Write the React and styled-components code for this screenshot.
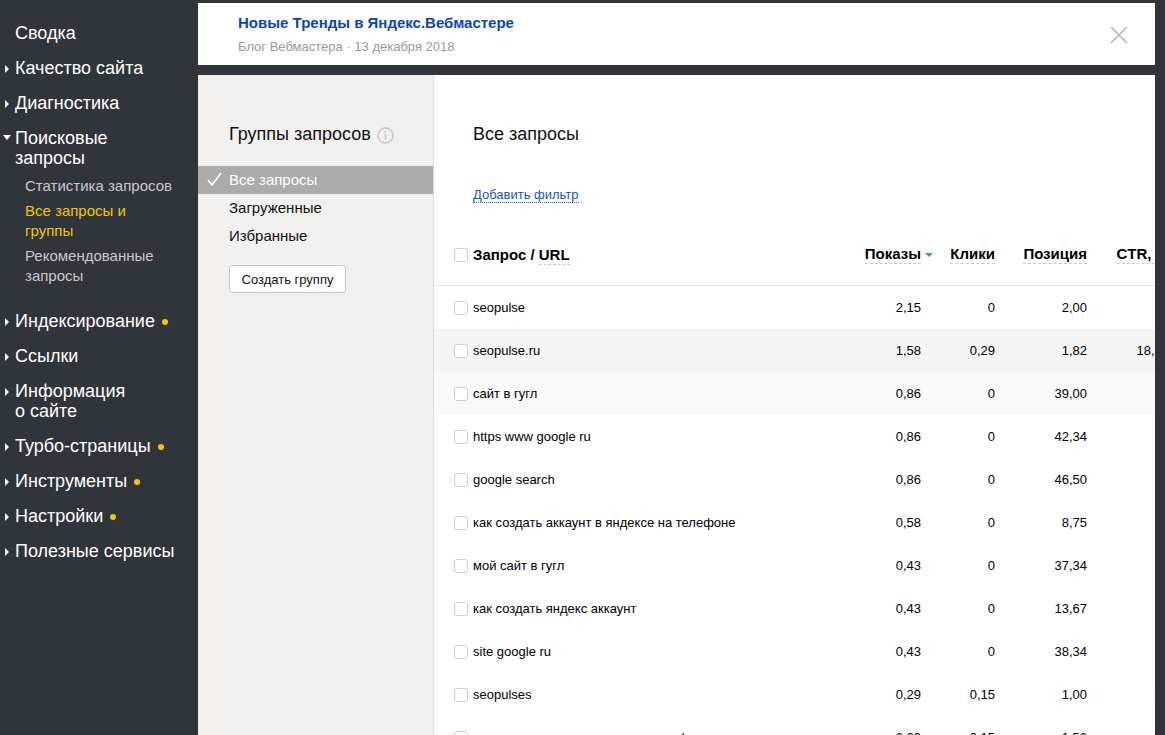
import React from 'react';
import styled, { createGlobalStyle } from 'styled-components';

const GlobalStyle = createGlobalStyle`
  html, body {
    margin: 0;
    height: 100%;
    overflow: hidden;
    background: #30343b;
    font-family: "Liberation Sans", Arial, sans-serif;
  }
  * { box-sizing: border-box; }
`;

const nav = [
  { label: 'Сводка', noArrow: true },
  { label: 'Качество сайта' },
  { label: 'Диагностика' },
  {
    label: ['Поисковые', 'запросы'],
    open: true,
    sub: [
      { label: ['Статистика запросов'] },
      { label: ['Все запросы и', 'группы'], active: true },
      { label: ['Рекомендованные', 'запросы'] },
    ],
  },
  { label: 'Индексирование', dot: true },
  { label: 'Ссылки' },
  { label: ['Информация', 'о сайте'] },
  { label: 'Турбо-страницы', dot: true },
  { label: 'Инструменты', dot: true },
  { label: 'Настройки', dot: true },
  { label: 'Полезные сервисы' },
];

const rows = [
  ['seopulse', '2,15', '0', '2,00', '0'],
  ['seopulse.ru', '1,58', '0,29', '1,82', '18,35'],
  ['сайт в гугл', '0,86', '0', '39,00', '0'],
  ['https www google ru', '0,86', '0', '42,34', '0'],
  ['google search', '0,86', '0', '46,50', '0'],
  ['как создать аккаунт в яндексе на телефоне', '0,58', '0', '8,75', '0'],
  ['мой сайт в гугл', '0,43', '0', '37,34', '0'],
  ['как создать яндекс аккаунт', '0,43', '0', '13,67', '0'],
  ['site google ru', '0,43', '0', '38,34', '0'],
  ['seopulses', '0,29', '0,15', '1,00', '52'],
  ['как создать аккаунт в гугл на телефоне', '0,29', '0,15', '1,50', '52'],
];

const lines = (label) =>
  (Array.isArray(label) ? label : [label]).map((l, i, arr) => (
    <React.Fragment key={i}>
      {l}
      {i < arr.length - 1 && <br />}
    </React.Fragment>
  ));

const App = () => {
  return (
    <Page>
      <GlobalStyle />
      <Sidebar>
        <NavList>
          {nav.map((item, i) => (
            <NavItem key={i}>
              <NavHead>
                <Arrow>
                  {!item.noArrow &&
                    (item.open ? (
                      <svg width="8" height="5" viewBox="0 0 8 5">
                        <path d="M0 0h8L4 5z" fill="#fff" />
                      </svg>
                    ) : (
                      <svg width="4" height="8" viewBox="0 0 4 8">
                        <path d="M0 0l4 4-4 4z" fill="#fff" />
                      </svg>
                    ))}
                </Arrow>
                <span>
                  {lines(item.label)}
                  {item.dot && <Dot />}
                </span>
              </NavHead>
              {item.sub && (
                <SubList>
                  {item.sub.map((s, j) => (
                    <SubItem key={j} $active={s.active}>
                      {lines(s.label)}
                    </SubItem>
                  ))}
                </SubList>
              )}
            </NavItem>
          ))}
        </NavList>
      </Sidebar>

      <MainColumn>
        <Banner>
          <BannerText>
            <BannerTitle>Новые Тренды в Яндекс.Вебмастере</BannerTitle>
            <BannerMeta>Блог Вебмастера · 13 декабря 2018</BannerMeta>
          </BannerText>
          <CloseButton>
            <svg width="18" height="18" viewBox="0 0 18 18">
              <path d="M1 1l16 16M17 1L1 17" stroke="#b5b5b5" strokeWidth="1.6" />
            </svg>
          </CloseButton>
        </Banner>

        <Content>
          <GroupsPanel>
            <GroupsTitle>
              Группы запросов
              <InfoIcon>
                <svg width="17" height="17" viewBox="0 0 17 17">
                  <circle cx="8.5" cy="8.5" r="7.5" fill="none" stroke="#c4c4c4" strokeWidth="1.3" />
                  <circle cx="8.5" cy="5" r="1" fill="#c4c4c4" />
                  <path d="M8.5 7.3v5.2" stroke="#c4c4c4" strokeWidth="1.5" />
                </svg>
              </InfoIcon>
            </GroupsTitle>
            <GroupList>
              <GroupRow $selected>
                <Check>
                  <svg width="15" height="14" viewBox="0 0 15 14">
                    <path d="M1 8l4 5L14 1" fill="none" stroke="#fff" strokeWidth="1.6" />
                  </svg>
                </Check>
                Все запросы
              </GroupRow>
              <GroupRow>
                <Check />
                Загруженные
              </GroupRow>
              <GroupRow>
                <Check />
                Избранные
              </GroupRow>
            </GroupList>
            <CreateButton>Создать группу</CreateButton>
          </GroupsPanel>

          <MainPanel>
            <MainTitle>Все запросы</MainTitle>
            <FilterWrap>
              <FilterLink>Добавить фильтр</FilterLink>
            </FilterWrap>
            <Table>
              <HeadRow>
                <Checkbox />
                <QueryCell>
                  <b>
                    Запрос / <Dashed>URL</Dashed>
                  </b>
                </QueryCell>
                <HeadCell $w={90}>
                  <Dashed>Показы</Dashed>
                  <SortArrow>
                    <svg width="8" height="4" viewBox="0 0 8 4">
                      <path d="M0 0h8L4 4z" fill="#3d8fe6" />
                    </svg>
                  </SortArrow>
                </HeadCell>
                <HeadCell $w={62}>
                  <Dashed>Клики</Dashed>
                </HeadCell>
                <HeadCell $w={92}>
                  <Dashed>Позиция</Dashed>
                </HeadCell>
                <HeadCell $w={82}>
                  <Dashed>CTR, %</Dashed>
                </HeadCell>
              </HeadRow>
              {rows.map((r, i) => (
                <Row key={i} $bg={i === 1 ? '#f4f4f4' : i === 2 ? '#f9f9f9' : '#fff'}>
                  <Checkbox />
                  <QueryCell>{r[0]}</QueryCell>
                  <Cell $w={90} $pr={12}>{r[1]}</Cell>
                  <Cell $w={62}>{r[2]}</Cell>
                  <Cell $w={92}>{r[3]}</Cell>
                  <Cell $w={82}>{r[4]}</Cell>
                </Row>
              ))}
            </Table>
          </MainPanel>
        </Content>
      </MainColumn>
    </Page>
  );
};

export default App;

const Page = styled.div`
  display: flex;
  height: 735px;
  overflow: hidden;
  background: #30343b;
`;

const Sidebar = styled.aside`
  width: 198px;
  flex-shrink: 0;
  padding-top: 23px;
  color: #fff;
`;

const NavList = styled.ul`
  list-style: none;
  margin: 0;
  padding: 0;
  display: flex;
  flex-direction: column;
  gap: 15px;
`;

const NavItem = styled.li`
  font-size: 18px;
  line-height: 20px;
`;

const NavHead = styled.div`
  display: flex;
`;

const Arrow = styled.span`
  width: 15px;
  flex-shrink: 0;
  display: flex;
  justify-content: center;
  align-items: flex-start;
  padding-top: 7px;
  padding-right: 2px;
`;

const Dot = styled.span`
  display: inline-block;
  width: 6px;
  height: 6px;
  border-radius: 50%;
  background: #f6c700;
  margin-left: 7px;
  vertical-align: 2px;
`;

const SubList = styled.ul`
  list-style: none;
  margin: 8px 0 0 25px;
  padding: 0 0 10px;
  display: flex;
  flex-direction: column;
  gap: 5px;
`;

const SubItem = styled.li`
  font-size: 15px;
  line-height: 20px;
  color: ${(p) => (p.$active ? '#f6c700' : '#c9c9c9')};
`;

const MainColumn = styled.div`
  flex: 1;
  min-width: 0;
  display: flex;
  flex-direction: column;
  padding: 3px 10px 0 0;
`;

const Banner = styled.div`
  height: 62px;
  flex-shrink: 0;
  background: #fff;
  display: flex;
  align-items: center;
  padding: 0 27px 0 40px;
  margin-bottom: 10px;
`;

const BannerText = styled.div`
  align-self: flex-start;
  padding-top: 11px;
  display: flex;
  flex-direction: column;
  gap: 7px;
`;

const BannerTitle = styled.div`
  font-size: 15px;
  line-height: 18px;
  font-weight: bold;
  color: #0b45b5;
`;

const BannerMeta = styled.div`
  font-size: 13px;
  line-height: 16px;
  color: #999;
`;

const CloseButton = styled.div`
  margin-left: auto;
  display: flex;
  margin-top: 1px;
`;

const Content = styled.div`
  flex: 1;
  display: flex;
  background: #fff;
  overflow: hidden;
`;

const GroupsPanel = styled.div`
  width: 236px;
  flex-shrink: 0;
  background: #f1f0ed;
  border-right: 1px solid #dedede;
`;

const GroupsTitle = styled.div`
  display: flex;
  align-items: center;
  padding: 49px 0 0 31px;
  font-size: 18px;
  line-height: 20px;
  color: #111;
`;

const InfoIcon = styled.span`
  display: flex;
  margin-left: 6px;
  margin-top: 2px;
`;

const GroupList = styled.div`
  margin-top: 22px;
`;

const GroupRow = styled.div`
  height: 28px;
  display: flex;
  align-items: center;
  padding: 0 0 2px 9px;
  font-size: 15px;
  color: ${(p) => (p.$selected ? '#fff' : '#111')};
  background: ${(p) => (p.$selected ? '#ababab' : 'transparent')};
`;

const Check = styled.span`
  width: 22px;
  display: flex;
  align-items: center;
`;

const CreateButton = styled.button`
  margin: 15px 0 0 31px;
  width: 117px;
  height: 28px;
  padding: 0;
  background: #fff;
  border: 1px solid #c6c6c6;
  border-radius: 3px;
  font-family: inherit;
  font-size: 13px;
  color: #111;
`;

const MainPanel = styled.div`
  flex: 1;
  min-width: 0;
  overflow: hidden;
`;

const MainTitle = styled.div`
  padding: 49px 0 0 39px;
  font-size: 18px;
  line-height: 20px;
  color: #111;
`;

const FilterWrap = styled.div`
  margin: 42px 0 0 39px;
  line-height: 16px;
`;

const FilterLink = styled.span`
  font-size: 13px;
  color: #1a55c0;
  border-bottom: 1px dotted #1a55c0;
`;

const Table = styled.div`
  width: 760px;
  margin-top: 22px;
`;

const HeadRow = styled.div`
  height: 61px;
  display: flex;
  align-items: center;
  padding: 0 25px 1px 20px;
  border-bottom: 1px solid #e6e6e6;
  font-size: 15px;
  color: #000;
`;

const Row = styled.div`
  height: 43px;
  display: flex;
  align-items: center;
  padding: 0 25px 0 20px;
  font-size: 13px;
  color: #000;
  background: ${(p) => p.$bg};
`;

const Checkbox = styled.span`
  width: 14px;
  height: 14px;
  flex-shrink: 0;
  border: 1px solid #cfcfcf;
  border-radius: 3px;
  background: #fff;
  margin-right: 5px;
`;

const QueryCell = styled.div`
  flex: 1;
  white-space: nowrap;
`;

const HeadCell = styled.div`
  width: ${(p) => p.$w}px;
  flex-shrink: 0;
  display: flex;
  justify-content: flex-end;
  align-items: center;
  font-weight: bold;
  white-space: nowrap;
`;

const Cell = styled.div`
  width: ${(p) => p.$w}px;
  flex-shrink: 0;
  text-align: right;
  padding-right: ${(p) => p.$pr || 0}px;
  white-space: nowrap;
`;

const Dashed = styled.span`
  border-bottom: 1px dashed #c8c8c8;
  padding-bottom: 1px;
`;

const SortArrow = styled.span`
  display: flex;
  margin-left: 4px;
`;
